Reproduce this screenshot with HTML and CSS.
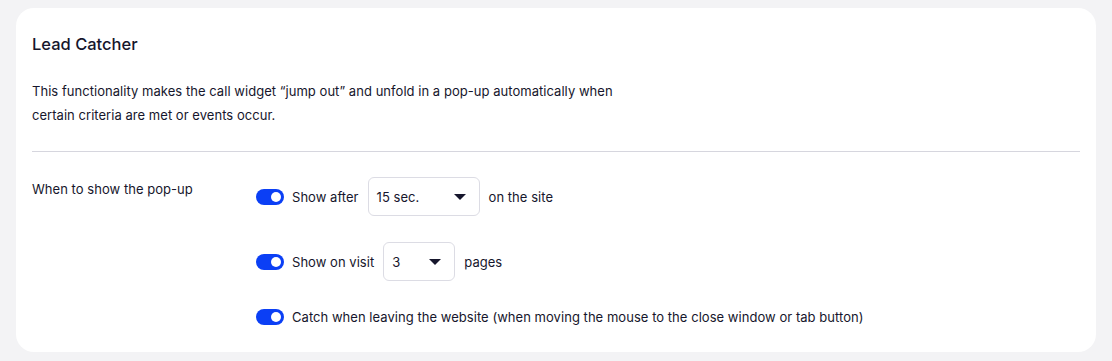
FILE: index.html
```html
<!DOCTYPE html>
<html lang="en">
<head>
    <meta charset="UTF-8">
    <meta name="viewport" content="width=device-width, initial-scale=1.0">
    <title>Lead Catcher</title>
    <link rel="stylesheet" href="styles.css">
</head>
<body>

<!-- Lead catcher settings card -->
<div class="card">
    <h2 class="card-title">Lead Catcher</h2>
    <p class="card-text">This functionality makes the call widget “jump out” and unfold in a pop-up automatically when certain criteria are met or events occur.</p>

    <div class="divider"></div>

    <div class="setting">
        <div class="setting-label">When to show the pop-up</div>
        <div class="setting-options">
            <div class="option">
                <span class="toggle on"></span>
                <span>Show after</span>
                <div class="select select-wide">
                    <span>15 sec.</span>
                    <span class="caret"></span>
                </div>
                <span>on the site</span>
            </div>
            <div class="option">
                <span class="toggle on"></span>
                <span>Show on visit</span>
                <div class="select select-narrow">
                    <span>3</span>
                    <span class="caret"></span>
                </div>
                <span>pages</span>
            </div>
            <div class="option option-plain">
                <span class="toggle on"></span>
                <span>Catch when leaving the website (when moving the mouse to the close window or tab button)</span>
            </div>
        </div>
    </div>
</div>

</body>
</html>
```

FILE: styles.css
```css
body {
    margin: 0;
    padding: 8px 16px 9px;
    background: #f3f3f5;
    font-family: Inter, "Noto Sans", sans-serif;
    color: #16162c;
}

.card {
    background: #fff;
    border-radius: 18px;
    padding: 24px 16px 25px;
}

.card-title {
    margin: 0;
    font-size: 16.5px;
    line-height: 24px;
    font-weight: 500;
}

.card-text {
    margin: 23px 0 0;
    max-width: 600px;
    font-size: 13px;
    line-height: 24px;
    letter-spacing: 0.04px;
}

.divider {
    height: 1px;
    background: #d6d6de;
    margin: 24px 0 25px;
}

.setting {
    display: flex;
    font-size: 13px;
    letter-spacing: 0.04px;
}

.setting-label {
    width: 224px;
    line-height: 20px;
    padding-top: 2px;
}

.setting-options {
    display: flex;
    flex-direction: column;
    gap: 26px;
}

.option {
    display: flex;
    align-items: center;
    gap: 8px;
    height: 39px;
}

.option-plain {
    height: 20px;
}

.toggle {
    position: relative;
    width: 28px;
    height: 16px;
    border-radius: 8px;
    background: #c9c9d3;
}

.toggle.on {
    background: #0b3ff5;
}

.toggle::after {
    content: "";
    position: absolute;
    top: 3px;
    left: 3px;
    width: 10px;
    height: 10px;
    border-radius: 50%;
    background: #fff;
}

.toggle.on::after {
    left: 15px;
}

.select {
    box-sizing: border-box;
    height: 39px;
    display: flex;
    align-items: center;
    justify-content: space-between;
    padding: 0 13px 0 8px;
    border: 1px solid #dcdce4;
    border-radius: 6px;
    margin: 0 1px;
}

.select-wide {
    width: 112px;
}

.select-narrow {
    width: 72px;
}

.caret {
    width: 0;
    height: 0;
    border-left: 6px solid transparent;
    border-right: 6px solid transparent;
    border-top: 6px solid #16162c;
}
```
